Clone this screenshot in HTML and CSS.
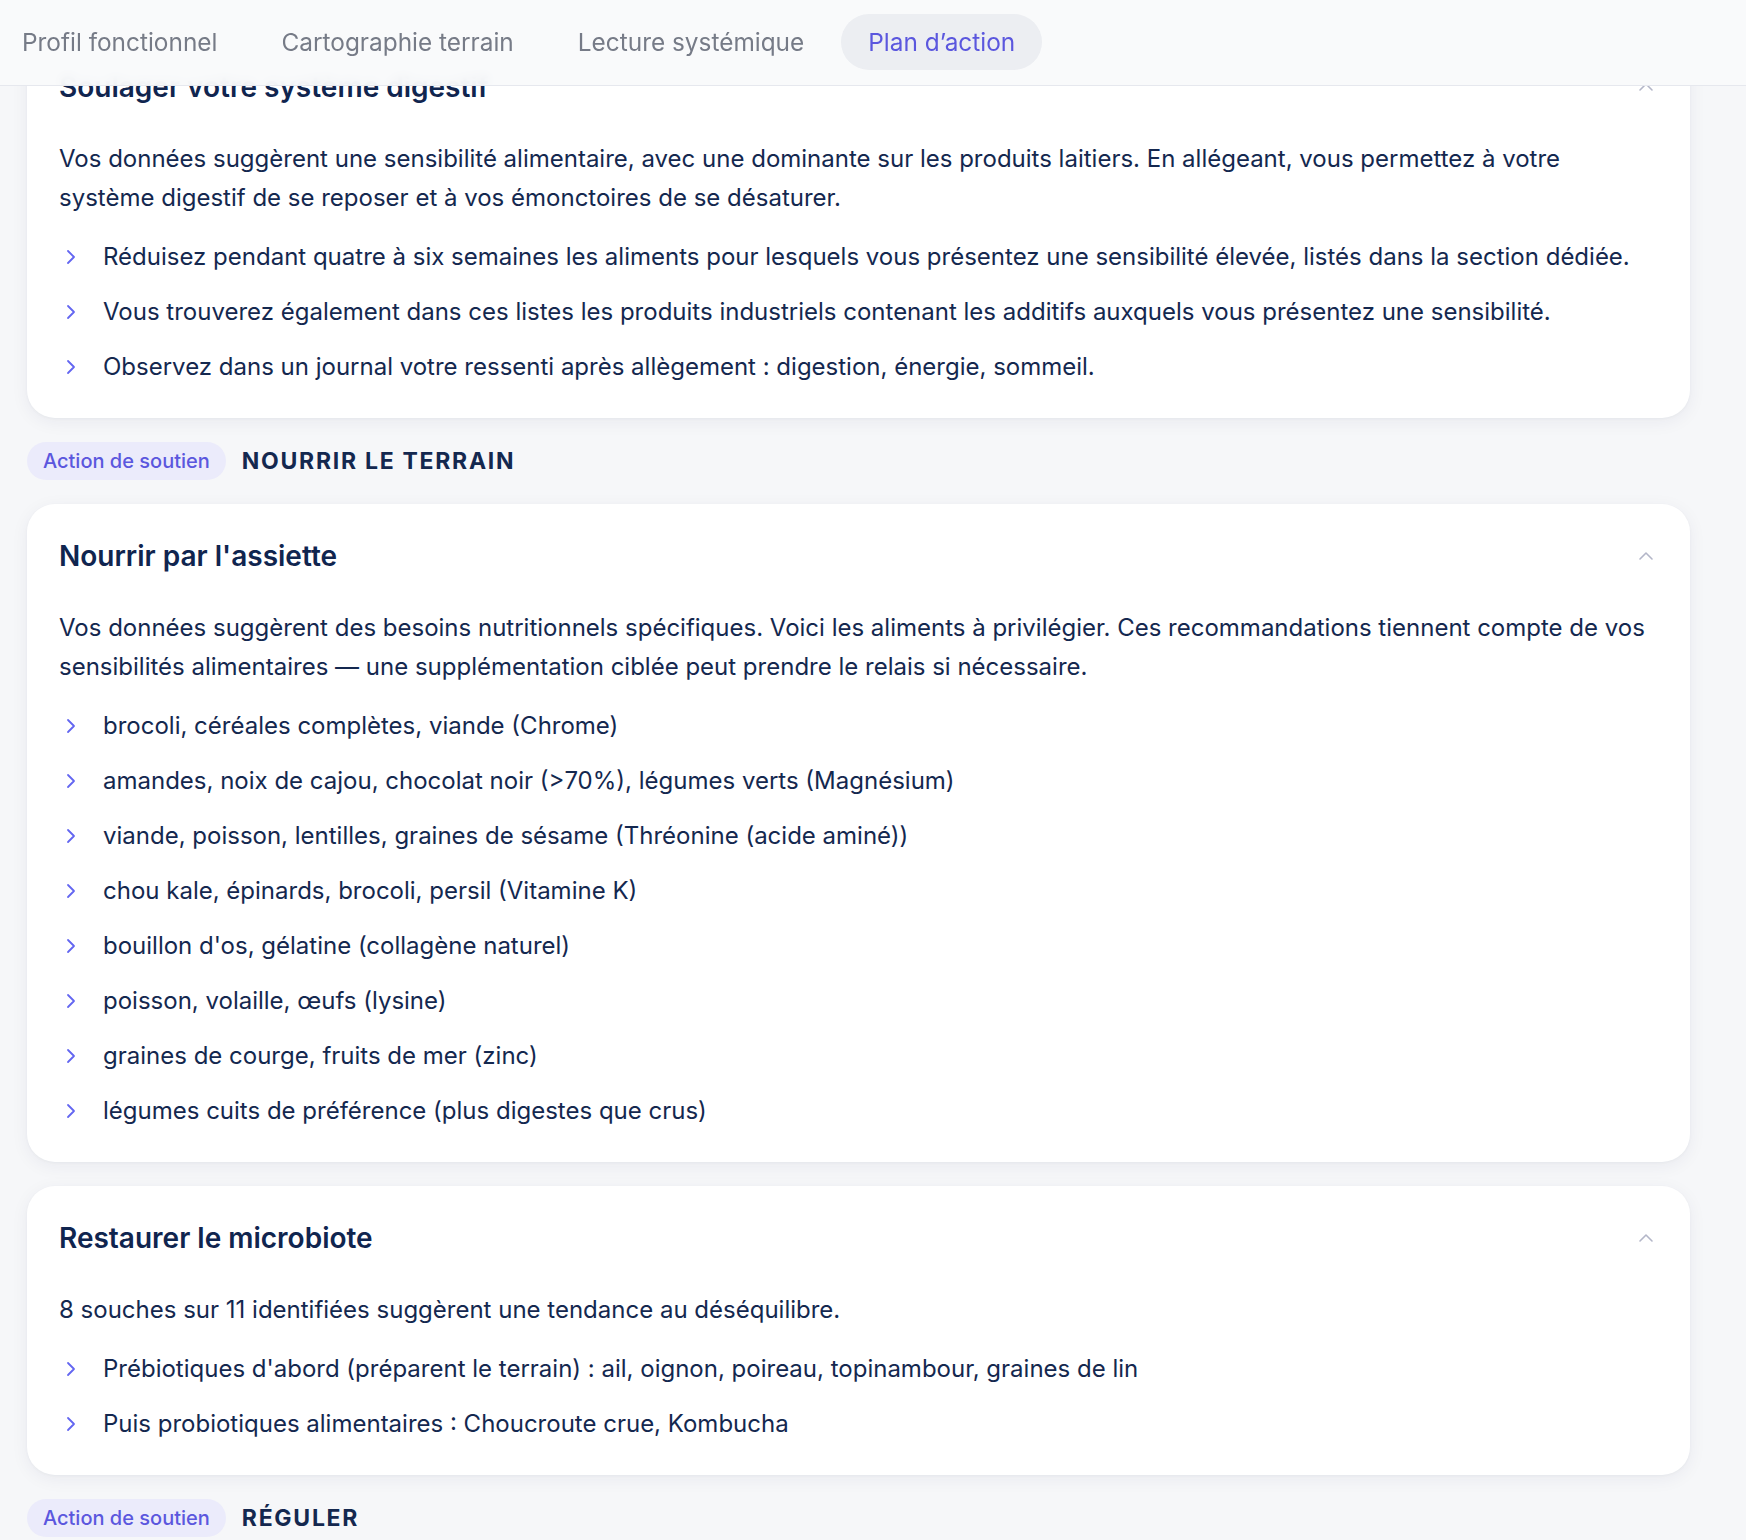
FILE: index.html
```html
<!doctype html>
<html lang="fr">
    <head>
        <meta charset="utf-8">
        <title>Plan d’action</title>
        <link rel="stylesheet" href="styles.css">
    </head>
    <body>
        <header class="tabs">
            <a class="tab">Profil fonctionnel</a>
            <a class="tab">Cartographie terrain</a>
            <a class="tab">Lecture systémique</a>
            <a class="tab active">Plan d’action</a>
        </header>

        <main class="plan">
            <section class="card">
                <div class="card-head">
                    <h2>Soulager votre système digestif</h2>
                    <svg class="toggle" viewBox="0 0 24 24"><path d="m18 15-6-6-6 6"/></svg>
                </div>
                <p>Vos données suggèrent une sensibilité alimentaire, avec une dominante sur les produits laitiers. En allégeant, vous permettez à votre système digestif de se reposer et à vos émonctoires de se désaturer.</p>
                <ul>
                    <li><svg viewBox="0 0 24 24"><path d="m9 18 6-6-6-6"/></svg>Réduisez pendant quatre à six semaines les aliments pour lesquels vous présentez une sensibilité élevée, listés dans la section dédiée.</li>
                    <li><svg viewBox="0 0 24 24"><path d="m9 18 6-6-6-6"/></svg>Vous trouverez également dans ces listes les produits industriels contenant les additifs auxquels vous présentez une sensibilité.</li>
                    <li><svg viewBox="0 0 24 24"><path d="m9 18 6-6-6-6"/></svg>Observez dans un journal votre ressenti après allègement : digestion, énergie, sommeil.</li>
                </ul>
            </section>

            <div class="group">
                <span class="badge">Action de soutien</span>
                <h3>Nourrir le terrain</h3>
            </div>

            <section class="card">
                <div class="card-head">
                    <h2>Nourrir par l'assiette</h2>
                    <svg class="toggle" viewBox="0 0 24 24"><path d="m18 15-6-6-6 6"/></svg>
                </div>
                <p>Vos données suggèrent des besoins nutritionnels spécifiques. Voici les aliments à privilégier. Ces recommandations tiennent compte de vos sensibilités alimentaires — une supplémentation ciblée peut prendre le relais si nécessaire.</p>
                <ul>
                    <li><svg viewBox="0 0 24 24"><path d="m9 18 6-6-6-6"/></svg>brocoli, céréales complètes, viande (Chrome)</li>
                    <li><svg viewBox="0 0 24 24"><path d="m9 18 6-6-6-6"/></svg>amandes, noix de cajou, chocolat noir (&gt;70%), légumes verts (Magnésium)</li>
                    <li><svg viewBox="0 0 24 24"><path d="m9 18 6-6-6-6"/></svg>viande, poisson, lentilles, graines de sésame (Thréonine (acide aminé))</li>
                    <li><svg viewBox="0 0 24 24"><path d="m9 18 6-6-6-6"/></svg>chou kale, épinards, brocoli, persil (Vitamine K)</li>
                    <li><svg viewBox="0 0 24 24"><path d="m9 18 6-6-6-6"/></svg>bouillon d'os, gélatine (collagène naturel)</li>
                    <li><svg viewBox="0 0 24 24"><path d="m9 18 6-6-6-6"/></svg>poisson, volaille, œufs (lysine)</li>
                    <li><svg viewBox="0 0 24 24"><path d="m9 18 6-6-6-6"/></svg>graines de courge, fruits de mer (zinc)</li>
                    <li><svg viewBox="0 0 24 24"><path d="m9 18 6-6-6-6"/></svg>légumes cuits de préférence (plus digestes que crus)</li>
                </ul>
            </section>

            <section class="card">
                <div class="card-head">
                    <h2>Restaurer le microbiote</h2>
                    <svg class="toggle" viewBox="0 0 24 24"><path d="m18 15-6-6-6 6"/></svg>
                </div>
                <p>8 souches sur 11 identifiées suggèrent une tendance au déséquilibre.</p>
                <ul>
                    <li><svg viewBox="0 0 24 24"><path d="m9 18 6-6-6-6"/></svg>Prébiotiques d'abord (préparent le terrain) : ail, oignon, poireau, topinambour, graines de lin</li>
                    <li><svg viewBox="0 0 24 24"><path d="m9 18 6-6-6-6"/></svg>Puis probiotiques alimentaires : Choucroute crue, Kombucha</li>
                </ul>
            </section>

            <div class="group">
                <span class="badge">Action de soutien</span>
                <h3>Réguler</h3>
            </div>
        </main>
    </body>
</html>
```

FILE: styles.css
```css
* {
    box-sizing: border-box;
    font-family: Inter, "Noto Sans", sans-serif;
}

html, body {
    height: 100%;
}

body {
    background: #f6f7f9;
    color: #14284f;
    margin: 0;
    padding: 0;
    overflow: hidden;
}

.tabs {
    position: fixed;
    top: 0;
    left: 0;
    right: 0;
    z-index: 10;
    height: 86px;
    display: flex;
    align-items: center;
    gap: 10px;
    padding: 0 0 2px 0;
    background: rgba(249, 250, 251, 0.94);
    backdrop-filter: blur(6px);
    border-bottom: 1px solid #e6e8ee;
}

.tab {
    display: flex;
    align-items: center;
    height: 56px;
    padding: 0 27px;
    border-radius: 28px;
    font-size: 24.4px;
    color: #767b87;
    white-space: nowrap;
}

.tab:first-child {
    padding-left: 22px;
}

.tab.active {
    background: #eceef2;
    color: #5b57de;
}

.plan {
    display: flex;
    flex-direction: column;
    gap: 24px;
    padding: 35px 56px 0 27px;
}

.card {
    background: #fff;
    border-radius: 28px;
    padding: 32px;
    box-shadow: 0 4px 18px rgba(30, 41, 80, 0.06), 0 1px 3px rgba(30, 41, 80, 0.04);
}

.card-head {
    display: flex;
    align-items: center;
    justify-content: space-between;
    height: 40px;
    margin-bottom: 32px;
}

.card h2 {
    margin: 0;
    font-size: 28px;
    font-weight: 600;
    color: #10254f;
}

.toggle {
    width: 24px;
    height: 24px;
    fill: none;
    stroke: #b3b6c8;
    stroke-width: 1.6;
    stroke-linecap: round;
    stroke-linejoin: round;
}

.card p {
    margin: 0;
    font-size: 24px;
    line-height: 39px;
}

.card ul {
    list-style: none;
    margin: 20px 0 0 0;
    padding: 0;
    display: flex;
    flex-direction: column;
    gap: 16px;
}

.card li {
    display: flex;
    align-items: center;
    gap: 20px;
    font-size: 24px;
    line-height: 39px;
}

.card li svg {
    flex: none;
    width: 24px;
    height: 24px;
    fill: none;
    stroke: #6366f1;
    stroke-width: 1.8;
    stroke-linecap: round;
    stroke-linejoin: round;
}

.group {
    display: flex;
    align-items: center;
    gap: 16px;
}

.badge {
    display: inline-flex;
    align-items: center;
    height: 38px;
    padding: 0 16px;
    border-radius: 19px;
    background: #ebebfb;
    color: #5b57de;
    font-size: 20px;
    font-weight: 500;
}

.group h3 {
    margin: 0;
    font-size: 23px;
    font-weight: 700;
    letter-spacing: 0.075em;
    text-transform: uppercase;
    color: #14284f;
}
```
